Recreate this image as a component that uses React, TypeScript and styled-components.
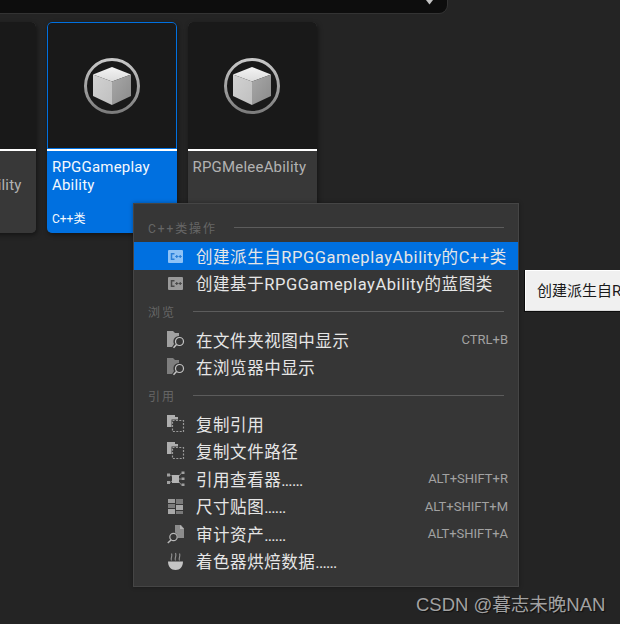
import React from "react";
import styled, { createGlobalStyle } from "styled-components";

const Global = createGlobalStyle`
  html, body { margin: 0; padding: 0; background: #242424; overflow: hidden; }
  #root { width: 620px; height: 624px; }
`;
const FONT = `Roboto, "Noto Sans CJK SC", sans-serif`;

const Page = styled.div`
  position: relative; width: 620px; height: 624px; overflow: hidden;
  background: #242424; font-family: ${FONT};
`;
const SearchBar = styled.div`
  position: relative; width: 447px; height: 13px; box-sizing: content-box;
  background: #0d0d0d; border-bottom-right-radius: 8px;
  box-shadow: 0 1px 0 #333333, 1px 0 0 #333333;
`;
const Chevron = styled.svg`
  position: absolute; left: 424px; top: 0; width: 11px; height: 5px;
`;
const CardRow = styled.div`
  display: flex; gap: 11px; margin-top: 9px; margin-left: -93.5px;
`;
const Card = styled.div`
  flex: none; width: 129.5px; height: 211px; box-sizing: border-box;
  display: flex; flex-direction: column; overflow: hidden;
  border-radius: 5px; background: #383838;
  box-shadow: 1px 2px 5px rgba(0,0,0,.45);
`;
const Thumb = styled.div<{ $selected?: boolean }>`
  height: 127px; background: #191919; flex: none;
  display: flex; align-items: center; justify-content: center;
  border-radius: 5px 5px 0 0;
  box-shadow: ${p => (p.$selected ? "inset 0 0 0 1px #0070e0" : "none")};
`;
const Divider = styled.div`
  height: 2px; flex: none; background: #ffffff;
`;
const Info = styled.div<{ $selected?: boolean }>`
  flex: 1; display: flex; flex-direction: column; justify-content: space-between;
  padding: 7px 4px 7px 5px;
  background: ${p => (p.$selected ? "#0070e0" : "#383838")};
  color: ${p => (p.$selected ? "#f4f8fd" : "#b2b2b2")};
`;
const CardName = styled.div`
  font-size: 15px; line-height: 18px; letter-spacing: .2px; white-space: pre-line;
`;
const CardType = styled.div`
  font-size: 12px; line-height: 14px;
`;
const Menu = styled.div`
  position: absolute; left: 133px; top: 203px; width: 386px; height: 384px;
  box-sizing: border-box; background: #363636; border: 1px solid #454545;
  padding: 9px 0 12px; box-shadow: 0 0 4px rgba(0,0,0,.35);
`;
const SectionHead = styled.div`
  height: 29px; display: flex; align-items: center; gap: 17px;
  padding: 0 14px; color: #666666; font-size: 12px; letter-spacing: 1.9px;
`;
const HeadLine = styled.div`
  flex: 1; height: 1px; background: #5c5c5c;
`;
const Row = styled.div<{ $active?: boolean }>`
  height: 27.5px; display: flex; align-items: center;
  padding: 0 10px 0 34px; font-size: 16.5px; letter-spacing: .55px;
  color: #e6e6e6; background: ${p => (p.$active ? "#0070e0" : "transparent")};
`;
const IconBox = styled.span`
  flex: none; width: 16px; height: 16px; margin-right: 12px; display: block;
  svg { display: block; width: 18px; height: 18px; margin: -1px; overflow: visible; }
`;
const Label = styled.span`
  flex: 1; white-space: nowrap;
`;
const Dots = styled.span`
  letter-spacing: -.8px;
`;
const Shortcut = styled.span`
  font-size: 13px; letter-spacing: 0; color: #a2a2a2;
`;
const Tip = styled.div`
  position: absolute; left: 525px; top: 270px; width: 300px; height: 41px;
  box-sizing: border-box; padding: 0 0 3px 11px; display: flex; align-items: center;
  background: #f0f0f0; color: #1a1a1a; font-size: 15px; white-space: nowrap;
  border-top: 1px solid #ffffff; border-left: 1px solid #ffffff; border-bottom: 1px solid #d8d8d8;
  box-shadow: -1px 0 0 #0c0c0c, 0 1px 0 #0c0c0c, -1px 1px 0 #0c0c0c;
`;
const Watermark = styled.div`
  position: absolute; left: 416px; top: 593px; font-size: 18.5px; line-height: 24px;
  font-family: "Liberation Sans", "Noto Sans CJK SC", sans-serif;
  color: #a2a2a2; white-space: nowrap; text-shadow: 1px 1px 1px rgba(0,0,0,.6);
`;

const CubeIcon = ({ id }: { id: string }) => (
  <svg width="58" height="58" viewBox="0 0 58 58">
    <defs>
      <linearGradient id={id + "r"} x1="0" y1="0" x2="0" y2="1">
        <stop offset="0" stopColor="#c8c8c8" />
        <stop offset="1" stopColor="#7c7c7c" />
      </linearGradient>
      <linearGradient id={id + "t"} x1="0" y1="0" x2="0" y2="1">
        <stop offset="0" stopColor="#f4f4f4" />
        <stop offset="1" stopColor="#dcdcdc" />
      </linearGradient>
      <linearGradient id={id + "l"} x1="0" y1="0" x2="1" y2="1">
        <stop offset="0" stopColor="#d2d2d2" />
        <stop offset="1" stopColor="#c0c0c0" />
      </linearGradient>
      <linearGradient id={id + "s"} x1="0" y1="0" x2="1" y2="1">
        <stop offset="0" stopColor="#a8a8a8" />
        <stop offset="1" stopColor="#8a8a8a" />
      </linearGradient>
    </defs>
    <circle cx="29" cy="29" r="26.5" fill="none" stroke={`url(#${id}r)`} strokeWidth="3" />
    <path d="M29 10 L48 17.5 L29 24.5 L10 17.5 Z" fill={`url(#${id}t)`} />
    <path d="M10 17.5 L29 24.5 V48 L10 39 Z" fill={`url(#${id}l)`} />
    <path d="M48 17.5 L29 24.5 V48 L48 39 Z" fill={`url(#${id}s)`} />
  </svg>
);

const CppIcon = ({ active }: { active?: boolean }) => {
  const bg = active ? "#8ec2f6" : "#9a9a9a";
  const fg = active ? "#2a7fd8" : "#4a4a4a";
  return (
    <svg viewBox="0 0 18 18">
      <rect x="1" y="3" width="15" height="13" rx="1" fill={bg} />
      <path d="M7.5 6.7H4.5V12.3H7.5" fill="none" stroke={fg} strokeWidth="1.5" />
      <path d="M8.2 9.5H11.3M9.75 8V11M11.7 9.5H14.8M13.25 8V11" fill="none" stroke={fg} strokeWidth="1.2" />
    </svg>
  );
};
const FolderIcon = ({ dim }: { dim?: boolean }) => {
  const c = dim ? "#7e7e7e" : "#a0a0a0";
  return (
    <svg viewBox="0 0 18 18">
      <path d="M0 0H6L8 2H12V5A5.5 5.5 0 0 0 7 13L5 16H0Z" fill={c} />
      <circle cx="12.5" cy="10.5" r="4" fill="none" stroke="#c4c4c4" strokeWidth="1.2" />
      <path d="M9.5 13.5L6.5 16.8" stroke="#c4c4c4" strokeWidth="1.5" />
    </svg>
  );
};
const CopyIcon = () => (
  <svg viewBox="0 0 18 18">
    <path d="M0 0H8V2H11V4.5H4.5V12H0Z" fill="#aeaeae" />
    <rect x="5.5" y="5.5" width="11" height="11" fill="none" stroke="#9a9a9a" strokeWidth="1.2" strokeDasharray="2 1.4" />
  </svg>
);
const GraphIcon = () => (
  <svg viewBox="0 0 18 18">
    <rect x="5" y="5" width="7" height="8" fill="#b4b4b4" />
    <rect x="0" y="3.5" width="3" height="3" fill="#a0a0a0" />
    <rect x="0" y="11" width="3" height="3" fill="#a0a0a0" />
    <path d="M3 5L5 6M3 12.5L5 11" stroke="#888" />
    <g fill="#a0a0a0">
      <rect x="14.5" y="1.5" width="3" height="2.5" />
      <rect x="14.5" y="7.5" width="3" height="2.5" />
      <rect x="14.5" y="13.5" width="3" height="2.5" />
    </g>
    <path d="M12 6L14.5 3M12 9H14.5M12 12L14.5 15" stroke="#888" />
  </svg>
);
const SizeIcon = () => (
  <svg viewBox="0 0 18 18">
    <rect x="1" y="2" width="7" height="4" fill="#9c9c9c" />
    <rect x="1" y="7" width="7" height="4" fill="#7c7c7c" />
    <rect x="1" y="12" width="7" height="5" fill="#a8a8a8" />
    <rect x="9" y="2" width="7" height="5" fill="#7a7a7a" />
    <rect x="9" y="8" width="7" height="5" fill="#a6a6a6" />
    <rect x="9" y="14" width="7" height="3" fill="#7a7a7a" />
  </svg>
);
const AuditIcon = () => (
  <svg viewBox="0 0 18 18">
    <path d="M8 0H14L17 3.5V13H10.5A5.5 5.5 0 0 0 8 7.5Z" fill="#8c8c8c" />
    <path d="M13 0L17 4H13Z" fill="#b4b4b4" />
    <circle cx="6.5" cy="12" r="3.7" fill="none" stroke="#b8b8b8" strokeWidth="1.2" />
    <path d="M4 15L0.8 18" stroke="#b8b8b8" strokeWidth="1.5" />
  </svg>
);
const BowlIcon = () => (
  <svg viewBox="0 0 18 18">
    <path d="M1 9.5H16C16 14.5 13 18 8.5 18S1 14.5 1 9.5Z" fill="#c4c4c4" />
    <path d="M4.5 8.5C3 6.5 6 4.5 4.5 1.5M8.5 8.5C7 6.5 10 4.5 8.5 1M12.5 8.5C11 6.5 14 4.5 12.5 1.5" fill="none" stroke="#8e8e8e" strokeWidth="1.2" />
  </svg>
);

type Item = { icon: React.ReactNode; label: string; dots?: boolean; key?: string; active?: boolean };
const sections: { title: string; items: Item[] }[] = [
  {
    title: "C++类操作",
    items: [
      { icon: <CppIcon active />, label: "创建派生自RPGGameplayAbility的C++类", active: true },
      { icon: <CppIcon />, label: "创建基于RPGGameplayAbility的蓝图类" },
    ],
  },
  {
    title: "浏览",
    items: [
      { icon: <FolderIcon />, label: "在文件夹视图中显示", key: "CTRL+B" },
      { icon: <FolderIcon dim />, label: "在浏览器中显示" },
    ],
  },
  {
    title: "引用",
    items: [
      { icon: <CopyIcon />, label: "复制引用" },
      { icon: <CopyIcon />, label: "复制文件路径" },
      { icon: <GraphIcon />, label: "引用查看器", dots: true, key: "ALT+SHIFT+R" },
      { icon: <SizeIcon />, label: "尺寸贴图", dots: true, key: "ALT+SHIFT+M" },
      { icon: <AuditIcon />, label: "审计资产", dots: true, key: "ALT+SHIFT+A" },
      { icon: <BowlIcon />, label: "着色器烘焙数据", dots: true },
    ],
  },
];

const cards = [
  { id: "a", name: "RPGTarget\nRPGBlockAbility", type: "" },
  { id: "b", name: "RPGGameplay\nAbility", type: "C++类", selected: true },
  { id: "c", name: "RPGMeleeAbility", type: "" },
];

export default function App() {
  return (
    <Page>
      <Global />
      <SearchBar>
        <Chevron viewBox="0 0 11 5">
          <path d="M2 0H9L5.5 4.5Z" fill="#c4c4c4" />
        </Chevron>
      </SearchBar>
      <CardRow>
        {cards.map(c => (
          <Card key={c.id}>
            <Thumb $selected={c.selected}><CubeIcon id={c.id} /></Thumb>
            <Divider />
            <Info $selected={c.selected}>
              <CardName>{c.name}</CardName>
              <CardType>{c.type}</CardType>
            </Info>
          </Card>
        ))}
      </CardRow>
      <Menu>
        {sections.map(s => (
          <React.Fragment key={s.title}>
            <SectionHead>{s.title}<HeadLine /></SectionHead>
            {s.items.map(i => (
              <Row key={i.label} $active={i.active}>
                <IconBox>{i.icon}</IconBox>
                <Label>{i.label}{i.dots && <Dots>......</Dots>}</Label>
                {i.key && <Shortcut>{i.key}</Shortcut>}
              </Row>
            ))}
          </React.Fragment>
        ))}
      </Menu>
      <Tip>创建派生自RPGGameplayAbility的C++类</Tip>
      <Watermark>CSDN @暮志未晚NAN</Watermark>
    </Page>
  );
}
